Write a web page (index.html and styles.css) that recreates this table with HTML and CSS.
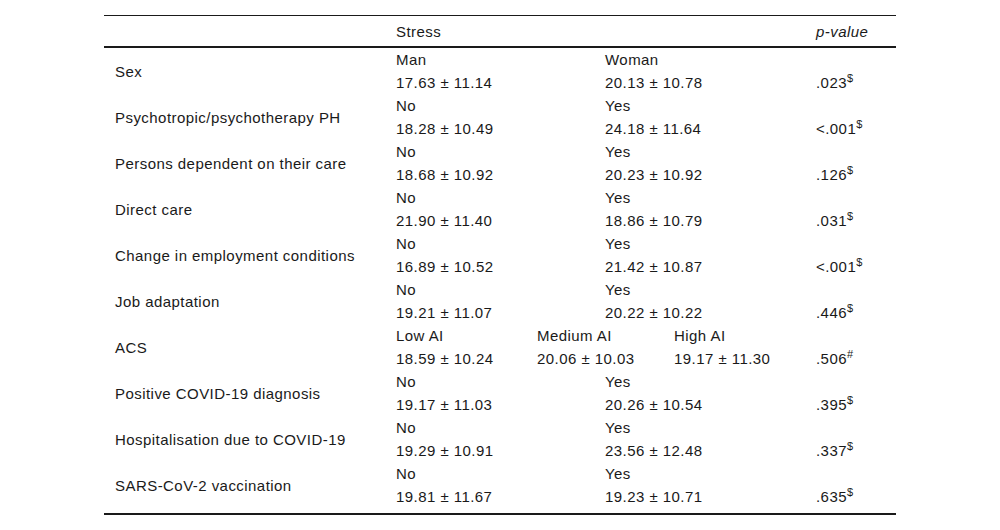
FILE: index.html
```html
<!DOCTYPE html>
<html lang="en">
<head>
<meta charset="utf-8">
<title>Stress table</title>
<link rel="stylesheet" href="styles.css">
</head>
<body>
<table class="tbl">
  <colgroup>
    <col class="c-label">
    <col class="c-stress">
    <col class="c-p">
  </colgroup>
  <thead>
    <tr>
      <th></th>
      <th>Stress</th>
      <th class="pv-head">p-value</th>
    </tr>
  </thead>
  <tbody>
    <tr>
      <td class="lbl">Sex</td>
      <td><div class="sub two"><span>Man</span><span>Woman</span><span>17.63 ± 11.14</span><span>20.13 ± 10.78</span></div></td>
      <td class="pv">.023<sup>$</sup></td>
    </tr>
    <tr>
      <td class="lbl">Psychotropic/psychotherapy PH</td>
      <td><div class="sub two"><span>No</span><span>Yes</span><span>18.28 ± 10.49</span><span>24.18 ± 11.64</span></div></td>
      <td class="pv">&lt;.001<sup>$</sup></td>
    </tr>
    <tr>
      <td class="lbl">Persons dependent on their care</td>
      <td><div class="sub two"><span>No</span><span>Yes</span><span>18.68 ± 10.92</span><span>20.23 ± 10.92</span></div></td>
      <td class="pv">.126<sup>$</sup></td>
    </tr>
    <tr>
      <td class="lbl">Direct care</td>
      <td><div class="sub two"><span>No</span><span>Yes</span><span>21.90 ± 11.40</span><span>18.86 ± 10.79</span></div></td>
      <td class="pv">.031<sup>$</sup></td>
    </tr>
    <tr>
      <td class="lbl">Change in employment conditions</td>
      <td><div class="sub two"><span>No</span><span>Yes</span><span>16.89 ± 10.52</span><span>21.42 ± 10.87</span></div></td>
      <td class="pv">&lt;.001<sup>$</sup></td>
    </tr>
    <tr>
      <td class="lbl">Job adaptation</td>
      <td><div class="sub two"><span>No</span><span>Yes</span><span>19.21 ± 11.07</span><span>20.22 ± 10.22</span></div></td>
      <td class="pv">.446<sup>$</sup></td>
    </tr>
    <tr>
      <td class="lbl">ACS</td>
      <td><div class="sub three"><span>Low AI</span><span>Medium AI</span><span>High AI</span><span>18.59 ± 10.24</span><span>20.06 ± 10.03</span><span>19.17 ± 11.30</span></div></td>
      <td class="pv">.506<sup>#</sup></td>
    </tr>
    <tr>
      <td class="lbl">Positive COVID-19 diagnosis</td>
      <td><div class="sub two"><span>No</span><span>Yes</span><span>19.17 ± 11.03</span><span>20.26 ± 10.54</span></div></td>
      <td class="pv">.395<sup>$</sup></td>
    </tr>
    <tr>
      <td class="lbl">Hospitalisation due to COVID-19</td>
      <td><div class="sub two"><span>No</span><span>Yes</span><span>19.29 ± 10.91</span><span>23.56 ± 12.48</span></div></td>
      <td class="pv">.337<sup>$</sup></td>
    </tr>
    <tr class="last">
      <td class="lbl">SARS-CoV-2 vaccination</td>
      <td><div class="sub two"><span>No</span><span>Yes</span><span>19.81 ± 11.67</span><span>19.23 ± 10.71</span></div></td>
      <td class="pv">.635<sup>$</sup></td>
    </tr>
  </tbody>
</table>
</body>
</html>
```

FILE: styles.css
```css
html, body {
  margin: 0;
  padding: 0;
  background: #ffffff;
}

body {
  padding-top: 15px;
  font-family: "Liberation Sans", Arial, sans-serif;
  font-size: 15px;
  letter-spacing: 0.45px;
  color: #1a1a1a;
}

.tbl {
  width: 792px;
  margin: 0 auto;
  border-collapse: collapse;
  table-layout: fixed;
  border-top: 1px solid #1a1a1a;
  border-bottom: 2px solid #1a1a1a;
}

.c-label { width: 281px; }
.c-stress { width: 420px; }
.c-p { width: 91px; }

.tbl th {
  height: 30px;
  padding: 0 0 0 11px;
  font-weight: normal;
  text-align: left;
  vertical-align: middle;
  border-bottom: 2px solid #1a1a1a;
}

.tbl th.pv-head {
  font-style: italic;
}

.tbl td {
  padding: 0 0 0 11px;
  line-height: 23px;
  height: 46px;
  vertical-align: middle;
}

.tbl tr.last td {
  padding-bottom: 5px;
}

.tbl td.pv {
  vertical-align: bottom;
}

.sub {
  display: grid;
}

.sub.two {
  grid-template-columns: 209px 209px;
}

.sub.three {
  grid-template-columns: 141px 137px 137px;
}

sup {
  font-size: 11px;
  letter-spacing: 0;
  line-height: 0;
  vertical-align: 6px;
}
```
